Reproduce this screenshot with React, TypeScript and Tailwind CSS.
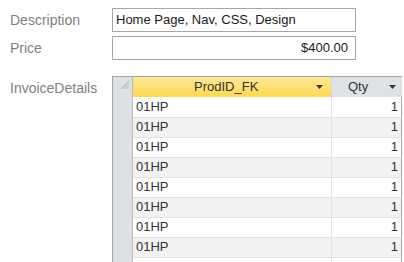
import React from "react";

const rows = Array.from({ length: 8 }, () => ({ prod: "01HP", qty: 1 }));

function Arrow() {
  return (
    <svg width="7" height="4" viewBox="0 0 7 4" className="shrink-0">
      <path d="M0 0h7L3.5 4z" fill="#333" />
    </svg>
  );
}

export default function App() {
  return (
    <div className="w-[404px] h-[262px] overflow-hidden bg-white font-['Liberation_Sans',Arial,sans-serif] text-[14px]">
      <div className="flex items-center pt-[8px]">
        <div className="w-[112px] pl-[10px] text-[#7f7f7f]">Description</div>
        <div className="w-[244px] h-[24px] border border-[#a6a6a6] px-[3px] flex items-center text-[13px] text-[#1a1a1a]">
          Home Page, Nav, CSS, Design
        </div>
      </div>
      <div className="flex items-center mt-[4px]">
        <div className="w-[112px] pl-[10px] text-[#7f7f7f]">Price</div>
        <div className="w-[244px] h-[24px] border border-[#a6a6a6] px-[7px] flex items-center justify-end text-[13px] text-[#1a1a1a]">
          $400.00
        </div>
      </div>

      <div className="flex mt-[16px]">
        <div className="w-[112px] pl-[10px] pt-[2px] text-[#7f7f7f]">InvoiceDetails</div>
        <div className="w-[290px] border-l border-t border-r border-[#a5a5a5] text-[13px]">
          <div className="grid grid-cols-[20px_199px_70px] h-[20px] border-b border-[#d0d0d0]">
            <div className="bg-[#dde1e6] border-r border-[#b4b8be] relative">
              <svg width="8" height="8" viewBox="0 0 8 8" className="absolute right-[3px] top-[4px]">
                <path d="M8 0L0 8h8z" fill="#c8ced6" />
                <path d="M8 0L0 8" stroke="#aeb8c4" strokeWidth="1" />
              </svg>
            </div>
            <div className="bg-gradient-to-b from-[#ffe896] to-[#fdd84e] border-r border-[#d6d6d6] flex items-center pl-[61px] pr-[8px] text-[#333]">
              <span className="flex-1">ProdID_FK</span>
              <Arrow />
            </div>
            <div className="bg-[#dee2e7] flex items-center pl-[16px] pr-[6px] text-[#333]">
              <span className="flex-1">Qty</span>
              <Arrow />
            </div>
          </div>
          {rows.map((r, i) => (
            <div
              key={i}
              className={`grid grid-cols-[20px_199px_70px] h-[20px] ${i % 2 === 1 ? "bg-[#f2f2f2]" : "bg-white"}`}
            >
              <div className="bg-[#dde1e6] border-r border-b border-[#b9bdc3]" />
              <div className="border-r border-b border-[#e3e3e3] flex items-center pl-[3px] text-[#333]">{r.prod}</div>
              <div className="border-b border-[#e3e3e3] flex items-center justify-end pr-[4px] text-[#333]">{r.qty}</div>
            </div>
          ))}
          <div className="grid grid-cols-[20px_199px_70px] h-[20px] bg-white">
            <div className="bg-[#dde1e6] border-r border-[#b9bdc3]" />
            <div className="border-r border-[#e3e3e3]" />
            <div />
          </div>
        </div>
      </div>
    </div>
  );
}
